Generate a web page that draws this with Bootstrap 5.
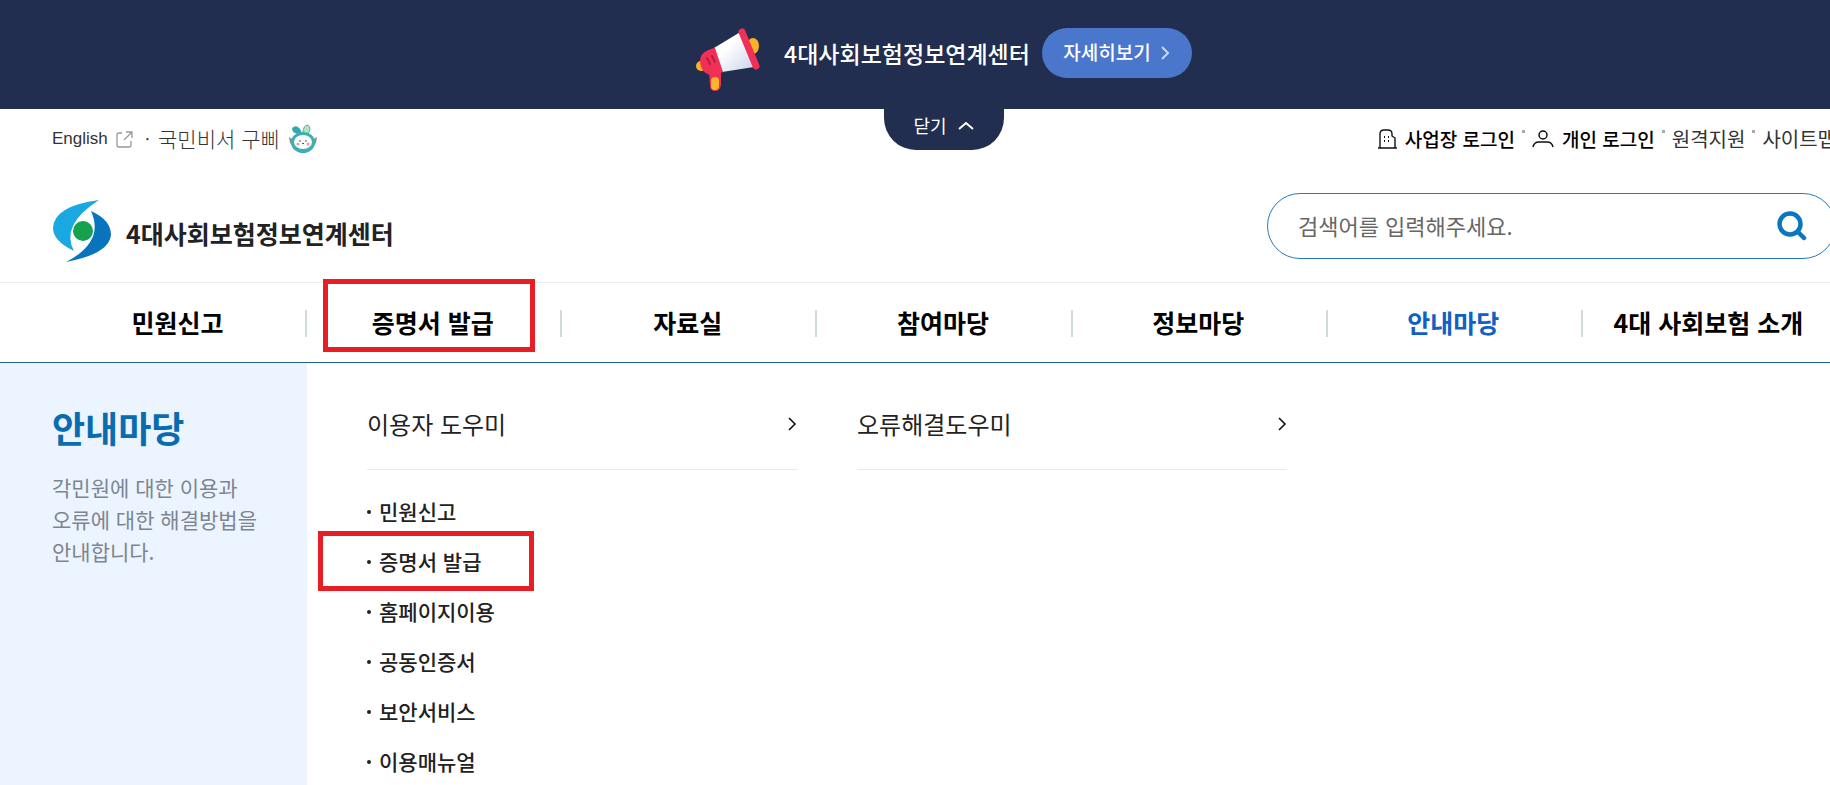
<!DOCTYPE html>
<html lang="ko">
<head>
<meta charset="utf-8">
<meta name="viewport" content="width=device-width, initial-scale=1">
<title>4대사회보험정보연계센터</title>
<link rel="stylesheet" href="https://cdn.jsdelivr.net/npm/bootstrap@5.3.0/dist/css/bootstrap.min.css">
<style>
:root{--navy:#212e50;--brand:#0a6cb0;--line:#ececec}
body{font-family:"Noto Sans CJK KR",sans-serif;color:#000;overflow-x:hidden;background:#fff}
a{color:inherit;text-decoration:none}
/* the site canvas is a little wider than the viewport */
.site{width:calc(100% + 58px);overflow:hidden}
.gutter{padding-left:52px;padding-right:52px}
.gnb.gutter{padding-left:50px}
.promo{background:var(--navy);height:109px;padding-bottom:4px}
.horn-icon{margin-top:16px}
.promo-title{font-size:23px;line-height:34px;font-weight:500;color:#fff;margin:0 12px 0 22px}
.btn-more{width:150px;height:50px;background:#4a76cb;color:#fff;font-size:19px;font-weight:500;border-radius:25px;padding:0}
.btn-more:hover{background:#3d69be;color:#fff}
.btn-fold{top:100%;left:50%;transform:translateX(-50%);width:120px;height:41px;background:var(--navy);color:#fff;font-size:18px;border:0;border-radius:0 0 32px 32px;padding:0 0 8px;gap:10px}
.util{height:60px;font-size:20px;color:#333}
.util .login{font-size:19px;font-weight:500;color:#000}
.util-left{font-size:21px;font-weight:300}
.en{font-family:"Liberation Sans",sans-serif;font-size:17px}
.dot{width:3px;height:3px;background:#aaa;align-self:flex-start;margin:6px 7px 0}
.brandbar{height:113px}
.logo{gap:14px;margin-top:10px}
.logo-text{font-size:25px;font-weight:700;color:#222;padding-top:6px}
.search{width:569px;height:66px;border:1px solid #2a7ab8;border-radius:33px;padding:0 28px 0 30px}
.search input{font-size:22px;border:0;padding:0;color:#333;background:none;box-shadow:none!important}
.search input::placeholder{color:#666;opacity:1}
.gnb{height:81px;border-top:1px solid var(--line);border-bottom:1px solid #1d628f}
.gnb li{flex:1 1 0}
.gnb li+li::before{content:"";width:2px;height:27px;background:#d0dadd;position:absolute;left:0;top:27px}
.gnb a{font-size:25px;font-weight:700}
.gnb .active{color:#1160c4}
.hl{position:absolute;border:5px solid #e81e25;pointer-events:none}
.hl-nav{left:18px;top:-4px;width:212px;height:73px}
.hl-item{left:-49px;top:-6px;width:216px;height:60px}
.intro{width:307px;background:#ebf4ff;padding:36px 20px 0 52px;flex:none}
.intro h2{font-size:36px;font-weight:700;line-height:56px;color:var(--brand);margin-bottom:16px}
.intro p{font-size:21px;line-height:32px;color:#7d8591}
.panel{min-height:422px}
.depth{gap:60px;padding-left:60px}
.group{width:430px}
.group-head{font-size:24px;line-height:36px;color:#222;padding:43px 0 27px;border-bottom:1px solid #e8e8e8}
.group ul{margin-top:17px}
.group li{font-size:21px;height:50px;font-weight:500;color:#222}
.group li::before{content:"";width:4px;height:4px;border-radius:50%;background:#222;margin-right:8px}
</style>
</head>
<body>
<div class="site">
  <aside class="promo position-relative d-flex align-items-center justify-content-center">
    <svg class="horn-icon" width="66" height="66" viewBox="0 0 66 66" aria-hidden="true">
      <defs><linearGradient id="horn" x1="0" y1="0" x2="1" y2="1"><stop offset=".35" stop-color="#fff"/><stop offset="1" stop-color="#c9d2e8"/></linearGradient></defs>
      <ellipse cx="57" cy="18" rx="6" ry="8" fill="#f9b126"/>
      <rect x="0" y="33" width="11" height="10" rx="5" fill="#f9b126"/>
      <path d="M13 42l12 3v12q-1 6-6 6t-5-6z" fill="#ee3150"/><rect x="15" y="49" width="8" height="13" rx="4" fill="#fdb62b"/>
      <path d="M18 20L46 3l12 36-32 5z" fill="url(#horn)"/>
      <path d="M19 20q-15 3-15 13 1 14 13 14 5 0 10-3z" fill="#f22f54"/>
      <path d="M11 30l3 6M16 28l3 6" stroke="#b51d46" stroke-width="2" stroke-linecap="round"/>
      <path d="M46 4L60 38" stroke="#ee3156" stroke-width="7" stroke-linecap="round"/>
    </svg>
    <span class="promo-title">4대사회보험정보연계센터</span>
    <button type="button" class="btn btn-more d-flex align-items-center justify-content-center gap-2">자세히보기
      <svg width="12" height="16" viewBox="0 0 12 16" fill="none" stroke="#c9d8f5" stroke-width="2"><path d="M3 2l6 6-6 6"/></svg></button>
    <button type="button" class="btn-fold position-absolute z-1 d-flex align-items-center justify-content-center">닫기
      <svg width="18" height="12" viewBox="0 0 18 12" fill="none" stroke="#fff" stroke-width="2"><path d="M2 9l7-6 7 6"/></svg></button>
  </aside>

  <header>
    <div class="gutter util d-flex align-items-center justify-content-between">
      <div class="util-left d-flex align-items-center">
        <a href="#" class="en">English</a>
        <svg class="ms-2" width="17" height="17" viewBox="0 0 17 17" fill="none" stroke="#999" stroke-width="1.3"><path d="M6 2H3Q1 2 1 4v10q0 2 2 2h10q2 0 2-2v-4M10 1h6v6M16 1L8 9"/></svg>
        <span class="mx-2 ps-1">·</span>
        <a href="#">국민비서 구삐</a>
        <svg class="ms-2" width="30" height="30" viewBox="0 0 30 30">
          <path d="M12 10Q4 10 4 4q6-5 10 5z" fill="#35a6ad"/><path d="M15 9q0-8 5-8 4 3 0 9z" fill="#b5e2c0" stroke="#51b5ab"/>
          <path d="M1 13l5 3-1 6-3-3zM29 13l-5 3 1 6 3-3z" fill="#8b8f86"/>
          <ellipse cx="15" cy="18.500" rx="12" ry="10.500" fill="#3eb0b4"/><ellipse cx="15" cy="18" rx="9" ry="7" fill="#fff"/>
          <circle cx="10" cy="20" r="1.500" fill="#f19a9e"/><circle cx="20" cy="20" r="1.500" fill="#f19a9e"/><path d="M12 16v2M18 16v2M14 20l1-1 1 1" stroke="#555" fill="none"/>
        </svg>
      </div>
      <div class="d-flex align-items-center">
        <svg class="me-2" width="19" height="20" viewBox="0 0 19 20" fill="none" stroke="#111" stroke-width="1.400"><path d="M0 19h19M2 19V5q0-4 4-4h4q4 0 4 4v2l3 2v10"/><path d="M6 8h1M10 8h1M6 12h1M10 12h1" stroke-width="2"/></svg>
        <a href="#" class="login">사업장 로그인</a><span class="dot"></span>
        <svg class="me-2" width="22" height="18" viewBox="0 0 22 18" fill="none" stroke="#111" stroke-width="1.500"><circle cx="11" cy="5" r="4"/><path d="M1 17q1-5 6-5h8q5 0 6 5"/></svg>
        <a href="#" class="login">개인 로그인</a><span class="dot"></span>
        <a href="#">원격지원</a><span class="dot"></span>
        <a href="#">사이트맵</a>
      </div>
    </div>
    <div class="gutter brandbar d-flex align-items-center justify-content-between">
      <a href="#" class="logo d-flex align-items-center">
        <svg width="60" height="62" viewBox="0 0 60 62">
          <path d="M47 0Q2 6 1 28q0 13 21 23Q8 25 47 0z" fill="#1aa8e0"/>
          <path d="M39 11q20 9 20 24Q57 54 14 62q39-20 25-51z" fill="#0874bd"/><circle cx="31" cy="31" r="10" fill="#16a14f"/>
        </svg>
        <span class="logo-text">4대사회보험정보연계센터</span>
      </a>
      <form class="search d-flex align-items-center" role="search">
        <input class="form-control" type="text" placeholder="검색어를 입력해주세요." aria-label="검색어">
        <button type="submit" class="btn border-0 p-0" aria-label="검색"><svg width="30" height="30" viewBox="0 0 30 30" fill="none" stroke="#0a76c0" stroke-width="4.500"><circle cx="13" cy="13" r="10.500"/><path d="M21 21l6 6" stroke-linecap="round"/></svg></button>
      </form>
    </div>
    <nav class="gnb gutter">
      <ul class="list-unstyled d-flex h-100 mb-0 text-center">
        <li class="position-relative d-flex align-items-center justify-content-center"><a href="#">민원신고</a></li>
        <li class="position-relative d-flex align-items-center justify-content-center"><a href="#">증명서 발급</a><span class="hl hl-nav"></span></li>
        <li class="position-relative d-flex align-items-center justify-content-center"><a href="#">자료실</a></li>
        <li class="position-relative d-flex align-items-center justify-content-center"><a href="#">참여마당</a></li>
        <li class="position-relative d-flex align-items-center justify-content-center"><a href="#">정보마당</a></li>
        <li class="position-relative d-flex align-items-center justify-content-center"><a href="#" class="active">안내마당</a></li>
        <li class="position-relative d-flex align-items-center justify-content-center"><a href="#">4대 사회보험 소개</a></li>
      </ul>
    </nav>
  </header>

  <main class="panel d-flex">
    <section class="intro">
      <h2>안내마당</h2>
      <p class="mb-0">각민원에 대한 이용과<br>오류에 대한 해결방법을<br>안내합니다.</p>
    </section>
    <div class="depth d-flex">
      <section class="group">
        <a href="#" class="group-head d-flex align-items-center justify-content-between">이용자 도우미
          <svg width="9" height="16" viewBox="0 0 9 16" fill="none" stroke="#111" stroke-width="1.600"><path d="M1 2l6 6-6 6"/></svg></a>
        <ul class="list-unstyled mb-0">
          <li class="d-flex align-items-center"><a href="#">민원신고</a></li>
          <li class="d-flex align-items-center position-relative"><a href="#">증명서 발급</a><span class="hl hl-item"></span></li>
          <li class="d-flex align-items-center"><a href="#">홈페이지이용</a></li>
          <li class="d-flex align-items-center"><a href="#">공동인증서</a></li>
          <li class="d-flex align-items-center"><a href="#">보안서비스</a></li>
          <li class="d-flex align-items-center"><a href="#">이용매뉴얼</a></li>
        </ul>
      </section>
      <section class="group">
        <a href="#" class="group-head d-flex align-items-center justify-content-between">오류해결도우미
          <svg width="9" height="16" viewBox="0 0 9 16" fill="none" stroke="#111" stroke-width="1.600"><path d="M1 2l6 6-6 6"/></svg></a>
      </section>
    </div>
  </main>
</div>
<script src="https://cdn.jsdelivr.net/npm/bootstrap@5.3.0/dist/js/bootstrap.bundle.min.js"></script>
</body>
</html>
